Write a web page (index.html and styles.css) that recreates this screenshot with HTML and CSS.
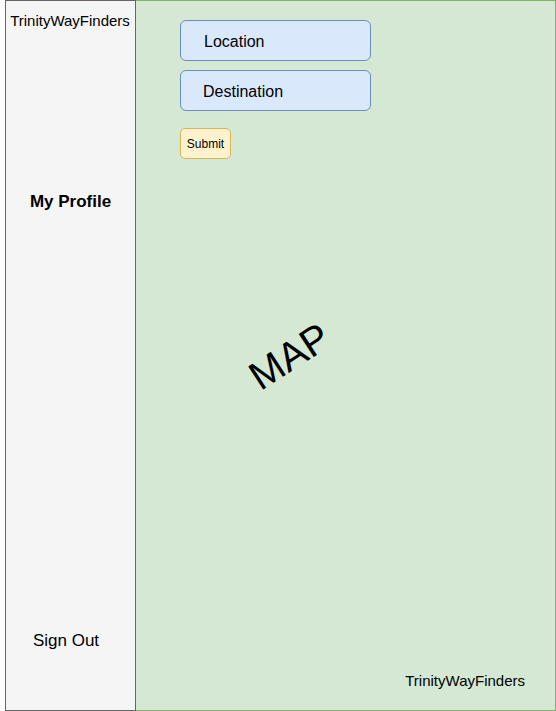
FILE: index.html
```html
<!DOCTYPE html>
<html lang="en">
<head>
<meta charset="utf-8">
<title>TrinityWayFinders</title>
<link rel="stylesheet" href="styles.css">
</head>
<body>
<div class="page">
  <aside class="sidebar">
    <div class="brand">TrinityWayFinders</div>
    <div class="profile">My Profile</div>
    <div class="signout">Sign Out</div>
  </aside>
  <main class="main">
    <div class="field field-loc">Location</div>
    <div class="field field-dest">Destination</div>
    <button class="submit" type="button">Submit</button>
    <div class="map-label">MAP</div>
    <div class="footer-brand">TrinityWayFinders</div>
  </main>
</div>
</body>
</html>
```

FILE: styles.css
```css
html, body {
  margin: 0;
  padding: 0;
  background: #ffffff;
  overflow: hidden;
}

body {
  font-family: "Liberation Sans", Arial, Helvetica, sans-serif;
  color: #000000;
}

.page {
  display: flex;
  padding-left: 5px;
  height: 711px;
  box-sizing: border-box;
}

.sidebar {
  position: relative;
  z-index: 1;
  width: 131px;
  height: 711px;
  box-sizing: border-box;
  background: #f5f5f5;
  border: 1px solid #666666;
  display: flex;
  flex-direction: column;
  align-items: center;
  text-align: center;
}

.brand {
  margin-top: 11px;
  margin-right: 1px;
  font-size: 15px;
  line-height: 18px;
}

.profile {
  margin-top: 162px;
  font-size: 17px;
  line-height: 20px;
  font-weight: bold;
}

.signout {
  margin-top: auto;
  margin-bottom: 59px;
  margin-right: 9px;
  font-size: 17px;
  line-height: 20px;
}

.main {
  margin-left: -1px;
  width: 421px;
  height: 711px;
  box-sizing: border-box;
  background: #d5e8d4;
  border: 1px solid #82b366;
  display: flex;
  flex-direction: column;
  align-items: flex-start;
  padding-left: 44px;
}

.field {
  margin-top: 19px;
  width: 191px;
  height: 41px;
  box-sizing: border-box;
  background: #dae8fc;
  border: 1px solid #6c8ebf;
  border-radius: 6px;
  display: flex;
  align-items: center;
  padding-left: 22px;
  padding-top: 3px;
  font-size: 16px;
  line-height: 18px;
}

.field-loc {
  padding-left: 23px;
}

.field-dest {
  margin-top: 9px;
}

.submit {
  margin-top: 17px;
  width: 51px;
  height: 31px;
  box-sizing: border-box;
  background: #fff2cc;
  border: 1px solid #d6b656;
  border-radius: 5px;
  padding: 1px 0 0 0;
  font-family: "Liberation Sans", Arial, Helvetica, sans-serif;
  font-size: 12px;
  line-height: 14px;
  color: #000000;
  text-align: center;
}

.map-label {
  margin-top: 174px;
  margin-left: 66px;
  font-size: 40px;
  line-height: 46px;
  transform: rotate(-33deg);
}

.footer-brand {
  margin-top: auto;
  margin-bottom: 20px;
  align-self: flex-end;
  margin-right: 30px;
  font-size: 15px;
  line-height: 18px;
}
```
